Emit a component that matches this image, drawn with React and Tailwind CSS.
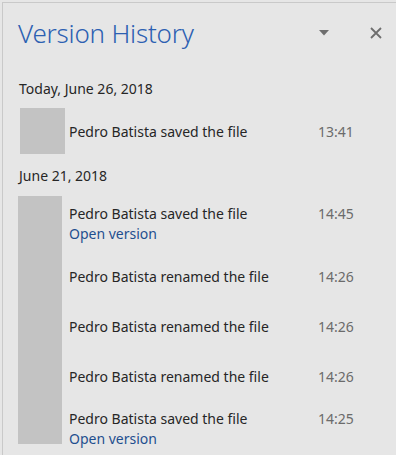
import React from 'react';

function Row({ text, time, link, className = '' }) {
  return (
    <div className={className}>
      <div className="flex items-center leading-[20px]">
        <span className="w-[249px] text-[14px] text-[#262626]">{text}</span>
        <span className="text-[14px] text-[#6b6b6b]">{time}</span>
      </div>
      {link && <div className="text-[14px] leading-[20px] text-[#1f4f8f]">Open version</div>}
    </div>
  );
}

export default function App() {
  return (
    <div className="w-[396px] h-[455px] bg-[#e6e6e6] pt-[2px] overflow-hidden font-['Noto_Sans',sans-serif]">
      <div className="h-full ml-[2px] border-t border-l border-[#c9c9c9]">
        {/* Header */}
        <div className="flex items-center h-[60px] pl-[15px] pr-[14px]">
          <h1 className="flex-1 text-[26px] font-light text-[#2c60b2] tracking-[-0.2px]">Version History</h1>
          <svg width="10" height="6" viewBox="0 0 10 6" className="mr-[41px]">
            <path d="M0 0 H10 L5 5.5 Z" fill="#6e6e6e" />
          </svg>
          <svg width="12" height="12" viewBox="0 0 12 12">
            <path d="M1 1 L11 11 M11 1 L1 11" stroke="#6e6e6e" strokeWidth="1.8" />
          </svg>
        </div>

        {/* Today */}
        <div className="mt-[16px] pl-[16px] text-[14px] leading-[20px] text-[#262626]">Today, June 26, 2018</div>
        <div className="mt-[9px] ml-[17px] flex items-start">
          <div className="w-[45px] h-[46px] bg-[#c3c3c3]" />
          <Row className="ml-[4px] mt-[14px]" text="Pedro Batista saved the file" time="13:41" />
        </div>

        {/* June 21 */}
        <div className="mt-[12px] pl-[16px] text-[14px] leading-[20px] text-[#262626]">June 21, 2018</div>
        <div className="mt-[10px] ml-[15px] flex">
          <div className="w-[44px] h-[248px] bg-[#c3c3c3]" />
          <div className="ml-[7px]">
            <Row className="mt-[8px]" text="Pedro Batista saved the file" time="14:45" link />
            <Row className="mt-[23px]" text="Pedro Batista renamed the file" time="14:26" />
            <Row className="mt-[30px]" text="Pedro Batista renamed the file" time="14:26" />
            <Row className="mt-[30px]" text="Pedro Batista renamed the file" time="14:26" />
            <Row className="mt-[22px]" text="Pedro Batista saved the file" time="14:25" link />
          </div>
        </div>
      </div>
    </div>
  );
}
